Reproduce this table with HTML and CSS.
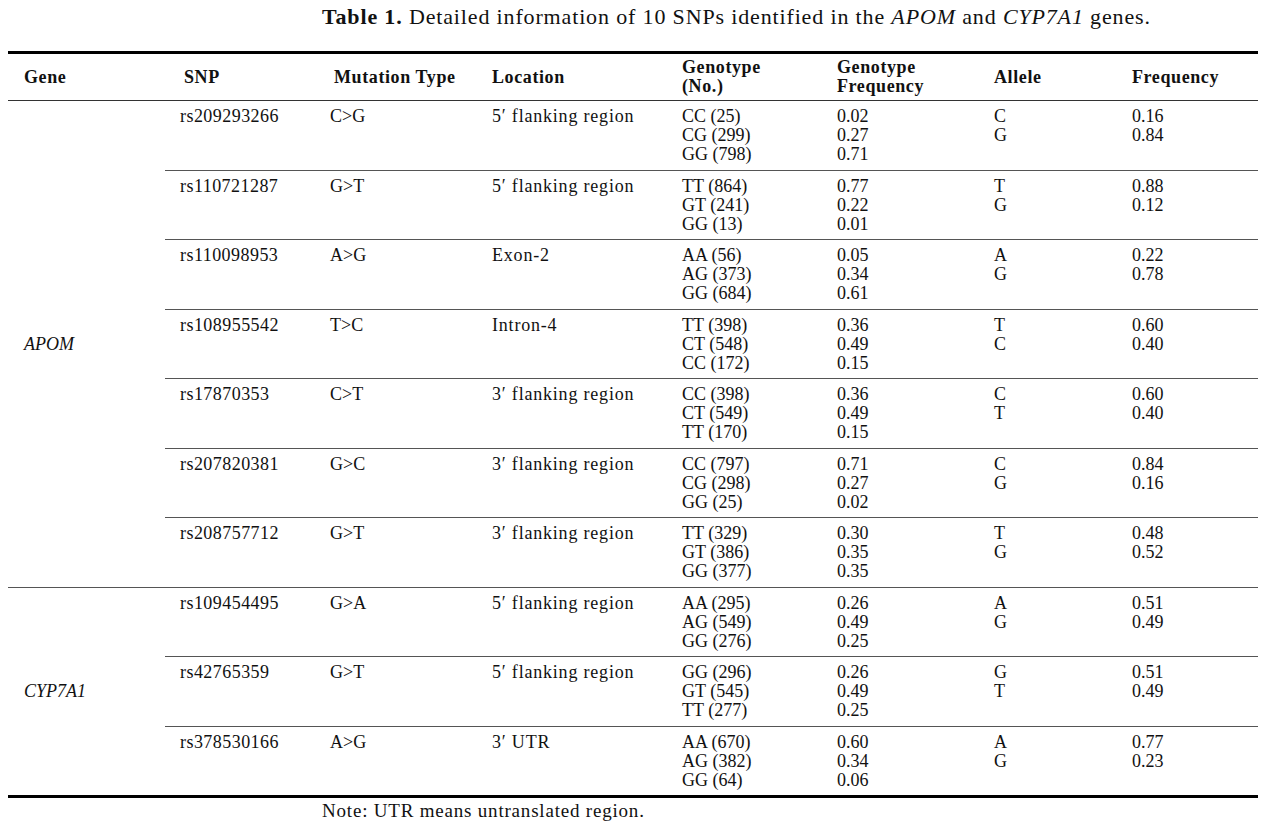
FILE: index.html
```html
<!DOCTYPE html>
<html lang="en">
<head>
<meta charset="utf-8">
<title>Table 1</title>
<link rel="stylesheet" href="styles.css">
</head>
<body>
<div class="caption"><b>Table 1.</b> Detailed information of 10 SNPs identified in the <i>APOM</i> and <i>CYP7A1</i> genes.</div>
<table class="snp">
  <colgroup>
    <col class="c-gene"><col class="c-snp"><col class="c-mut"><col class="c-loc"><col class="c-geno"><col class="c-gf"><col class="c-al"><col class="c-fr">
  </colgroup>
  <thead>
    <tr>
      <th class="gene">Gene</th>
      <th class="snpid">SNP</th>
      <th class="mut">Mutation Type</th>
      <th>Location</th>
      <th>Genotype<br>(No.)</th>
      <th>Genotype<br>Frequency</th>
      <th>Allele</th>
      <th>Frequency</th>
    </tr>
  </thead>
  <tbody>
    <tr class="first">
      <td class="gene" rowspan="7"><i>APOM</i></td>
      <td class="snpid">rs209293266</td><td>C&gt;G</td><td class="loc">5&#8242; flanking region</td>
      <td>CC (25)<br>CG (299)<br>GG (798)</td><td>0.02<br>0.27<br>0.71</td><td>C<br>G</td><td>0.16<br>0.84</td>
    </tr>
    <tr>
      <td class="snpid">rs110721287</td><td>G&gt;T</td><td class="loc">5&#8242; flanking region</td>
      <td>TT (864)<br>GT (241)<br>GG (13)</td><td>0.77<br>0.22<br>0.01</td><td>T<br>G</td><td>0.88<br>0.12</td>
    </tr>
    <tr>
      <td class="snpid">rs110098953</td><td>A&gt;G</td><td class="loc">Exon-2</td>
      <td>AA (56)<br>AG (373)<br>GG (684)</td><td>0.05<br>0.34<br>0.61</td><td>A<br>G</td><td>0.22<br>0.78</td>
    </tr>
    <tr>
      <td class="snpid">rs108955542</td><td>T&gt;C</td><td class="loc">Intron-4</td>
      <td>TT (398)<br>CT (548)<br>CC (172)</td><td>0.36<br>0.49<br>0.15</td><td>T<br>C</td><td>0.60<br>0.40</td>
    </tr>
    <tr>
      <td class="snpid">rs17870353</td><td>C&gt;T</td><td class="loc">3&#8242; flanking region</td>
      <td>CC (398)<br>CT (549)<br>TT (170)</td><td>0.36<br>0.49<br>0.15</td><td>C<br>T</td><td>0.60<br>0.40</td>
    </tr>
    <tr>
      <td class="snpid">rs207820381</td><td>G&gt;C</td><td class="loc">3&#8242; flanking region</td>
      <td>CC (797)<br>CG (298)<br>GG (25)</td><td>0.71<br>0.27<br>0.02</td><td>C<br>G</td><td>0.84<br>0.16</td>
    </tr>
    <tr>
      <td class="snpid">rs208757712</td><td>G&gt;T</td><td class="loc">3&#8242; flanking region</td>
      <td>TT (329)<br>GT (386)<br>GG (377)</td><td>0.30<br>0.35<br>0.35</td><td>T<br>G</td><td>0.48<br>0.52</td>
    </tr>
    <tr>
      <td class="gene" rowspan="3"><i>CYP7A1</i></td>
      <td class="snpid">rs109454495</td><td>G&gt;A</td><td class="loc">5&#8242; flanking region</td>
      <td>AA (295)<br>AG (549)<br>GG (276)</td><td>0.26<br>0.49<br>0.25</td><td>A<br>G</td><td>0.51<br>0.49</td>
    </tr>
    <tr>
      <td class="snpid">rs42765359</td><td>G&gt;T</td><td class="loc">5&#8242; flanking region</td>
      <td>GG (296)<br>GT (545)<br>TT (277)</td><td>0.26<br>0.49<br>0.25</td><td>G<br>T</td><td>0.51<br>0.49</td>
    </tr>
    <tr class="last">
      <td class="snpid">rs378530166</td><td>A&gt;G</td><td class="loc">3&#8242; UTR</td>
      <td>AA (670)<br>AG (382)<br>GG (64)</td><td>0.60<br>0.34<br>0.06</td><td>A<br>G</td><td>0.77<br>0.23</td>
    </tr>
  </tbody>
</table>
<div class="note">Note: UTR means untranslated region.</div>
</body>
</html>
```

FILE: styles.css
```css
html, body {
  margin: 0;
  padding: 0;
  background: #ffffff;
}

body {
  font-family: "Liberation Serif", "Times New Roman", serif;
  color: #111111;
  font-size: 18px;
  width: 1280px;
}

.caption {
  box-sizing: border-box;
  height: 51px;
  padding: 4px 0 0 322px;
  font-size: 22px;
  line-height: 26px;
  letter-spacing: 0.85px;
}

.snp {
  margin-left: 8px;
  width: 1250px;
  table-layout: fixed;
  border-collapse: separate;
  border-spacing: 0;
  border-top: 3px solid #000;
  border-bottom: 3px solid #000;
}

.c-gene { width: 157px; }
.c-snp  { width: 165px; }
.c-mut  { width: 162px; }
.c-loc  { width: 190px; }
.c-geno { width: 155px; }
.c-gf   { width: 157px; }
.c-al   { width: 138px; }
.c-fr   { width: 126px; }

.snp th,
.snp td {
  padding: 0;
  text-align: left;
  line-height: 19px;
}

.snp th {
  font-weight: bold;
  vertical-align: middle;
  padding-top: 4px;
  padding-bottom: 4px;
  letter-spacing: 0.6px;
  border-bottom: 1px solid #333;
}

.snp td {
  vertical-align: top;
  padding-top: 6px;
  padding-bottom: 5.5px;
  border-top: 1px solid #555;
}

.snp tr.first td {
  border-top: none;
}

.snp .gene {
  padding-left: 16px;
}

.snp td.gene {
  vertical-align: middle;
}

.snp .snpid {
  padding-left: 15px;
}

.snp td.snpid {
  letter-spacing: 0.45px;
}

.snp th.snpid {
  padding-left: 19px;
}

.snp th.mut {
  padding-left: 4px;
}

.snp td.loc {
  letter-spacing: 0.8px;
}

.note {
  padding: 2px 0 0 322px;
  font-size: 19px;
  line-height: 22px;
  letter-spacing: 0.8px;
}
```
